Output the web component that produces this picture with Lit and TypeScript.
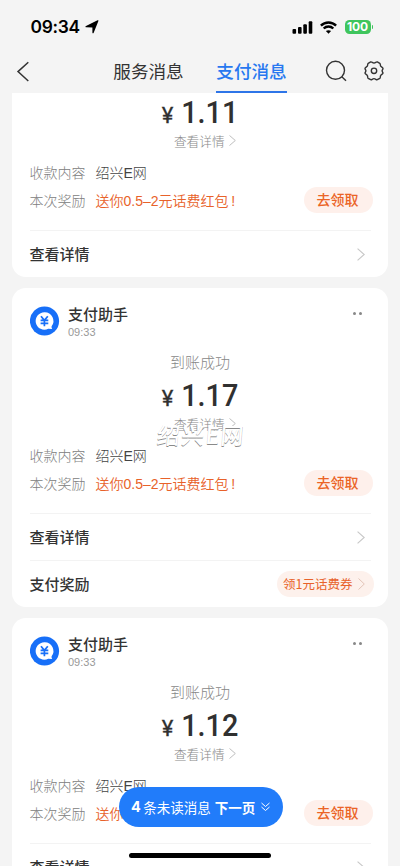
import { LitElement, html, css, nothing } from "lit";
import { customElement, property } from "lit/decorators.js";

const chevron = (w: number, h: number) => html`<svg width=${w} height=${h} viewBox="0 0 7 12" preserveAspectRatio="none" fill="none" stroke="currentColor" stroke-width="1"><path d="M.5 .5 6.3 6 .5 11.5" /></svg>`;

@customElement("status-bar")
class StatusBar extends LitElement {
  static styles = css`
    :host { display: flex; height: 53px; box-sizing: border-box; padding: 17px 27px 0 30.5px; align-items: flex-start; justify-content: space-between; color: #000; }
    .left { display: flex; align-items: center; height: 20px; gap: 5px; }
    .time { font: 600 17.4px/20px Inter, sans-serif; letter-spacing: -0.3px; white-space: nowrap; width: 49px; }
    .right { display: flex; align-items: center; height: 20px; }
    .wifi { margin: 0 8px 0 7px; }
    .battery { width: 26px; height: 14px; border-radius: 4.5px; background: #3fc55d; color: #fff; font: 700 12px/14px Inter, sans-serif; text-align: center; letter-spacing: -0.1px; }
    .cap { width: 1.5px; height: 4px; margin-left: 1px; border-radius: 0 2px 2px 0; background: #3fc55d; }
    svg { display: block; }
  `;
  render() {
    return html`
      <div class="left">
        <span class="time">09:34</span>
        <svg width="14" height="14" viewBox="0 0 14 14"><path d="M13.4.9 8.6 12.9c-.3.7-1.200.6-1.200-.2V7.400L1.300 7.300C.3 7.300.2 6.400 1 6L12.500.3c.7-.3 1.200 0 .9.6Z" fill="#000" /></svg>
      </div>
      <div class="right">
        <svg width="21" height="13" viewBox="0 0 21 13"><rect x=".5" y="8" width="3.6" height="4.7" rx="1" /><rect x="6" y="6" width="3.6" height="6.7" rx="1" /><rect x="11.3" y="3.3" width="3.6" height="9.4" rx="1" /><rect x="16.7" y=".2" width="3.6" height="12.5" rx="1" /></svg>
        <svg class="wifi" width="17" height="13" viewBox="0 0 17 13" fill="none" stroke="#000" stroke-width="2.4"><path d="M.9 4.6C5.1.4 11.9.4 16.1 4.6M3.7 7.5c2.7-2.7 6.9-2.7 9.6 0" /><path d="m8.5 12.7-2.6-2.6c1.5-1.3 3.7-1.3 5.2 0Z" fill="#000" stroke="none" /></svg>
        <div class="battery">100</div><div class="cap"></div>
      </div>`;
  }
}

@customElement("nav-bar")
class NavBar extends LitElement {
  static styles = css`
    :host { display: flex; height: 40px; align-items: stretch; padding: 0 16.5px 0 16px; box-sizing: border-box; color: #333; }
    .side { flex: none; width: 97px; padding-top: 7.5px; box-sizing: border-box; }
    .tabs { display: flex; gap: 32px; flex: none; }
    .tab { box-sizing: border-box; width: 71px; height: 40px; font: 400 17.6px/35px "Noto Sans CJK SC", sans-serif; white-space: nowrap; text-align: center; }
    .active { color: #2878f0; font-weight: 500; border-bottom: 2px solid #2e75e8; }
    .tools { display: flex; flex: 1; justify-content: flex-end; gap: 17px; padding-top: 7px; }
    svg { display: block; flex: none; }
  `;
  render() {
    return html`
      <div class="side"><svg width="14" height="22" viewBox="0 0 14 22" fill="none" stroke="#333" stroke-width="1.5"><path d="M12.3 1.2 2 10.6l10.3 9.4" /></svg></div>
      <div class="tabs"><div class="tab">服务消息</div><div class="tab active">支付消息</div></div>
      <div class="tools">
        <svg width="22" height="22" viewBox="0 0 22 22" fill="none" stroke="#333" stroke-width="1.4"><circle cx="10.5" cy="10.3" r="9" /><path d="m16.8 16.8 4.2 4" /></svg>
        <svg width="20" height="22" viewBox="0 0 20 22" fill="none" stroke="#333" stroke-width="1.4" stroke-linejoin="round"><path d="M6.7 1.9 4.2 3.3C3.4 3.8 3.9 5.3 3.3 6.2 2.7 7.2 1 7.4 1 8.500 1 9.300 1.900 9.900 1.900 10.800S1 12.300 1 13.100c0 1.100 1.700 1.300 2.300 2.300.6.9.1 2.400.9 2.900l2.500 1.400c1 .5 1.800-1.100 3.300-1.100s2.300 1.600 3.300 1.100l2.500-1.400c.8-.5.3-2 .9-2.900.6-1 2.300-1.200 2.300-2.300 0-.8-.9-1.400-.9-2.300s.9-1.500.9-2.300c0-1.100-1.700-1.300-2.300-2.300-.6-.9-.1-2.400-.9-2.900L13.300 1.900C12.300 1.400 11.500 3 10 3S7.700 1.400 6.700 1.900Z" /><circle cx="10" cy="10.8" r="2.7" /></svg>
      </div>`;
  }
}

@customElement("pay-card")
class PayCard extends LitElement {
  @property() amount = "";
  @property({ type: Boolean }) reward = false;
  @property({ type: Boolean }) stamped = false;
  static styles = css`
    :host { display: block; position: relative; flex: none; background: #fff; border-radius: 14px; padding: 0 15px 0 17.5px; font-family: "Noto Sans CJK SC", sans-serif; color: #333; }
    svg { display: block; flex: none; }
    .head { display: flex; height: 60px; box-sizing: border-box; padding-top: 17px; }
    .avatar { margin: 1px 8.5px 0 0; }
    .who { flex: 1; }
    .name { font-size: 15px; line-height: 17px; font-weight: 500; }
    .time { font: 400 11px/13px "Liberation Sans", Arial, sans-serif; color: #999; margin-top: 4px; }
    .more { display: flex; gap: 2.5px; padding: 7px 11.5px 0 0; }
    .more i { width: 3px; height: 3px; border-radius: 50%; background: #888; }
    .center { margin: 0 2px 0 -0.5px; text-align: center; }
    .status { font-size: 15px; line-height: 20px; color: #888; padding-top: 4.5px; font-weight: 300; }
    .sum { display: flex; justify-content: center; align-items: baseline; height: 38px; line-height: 38px; margin-top: 5px; font-family: Roboto, sans-serif; font-weight: 500; color: #303030; }
    .yen { font-size: 22px; font-weight: 400; -webkit-text-stroke: 0.3px #303030; margin-right: 7px; }
    .num { font-size: 31px; transform: scaleX(0.93); margin: 0 -2.5px 0 -1px; }
    .link { display: flex; justify-content: center; align-items: center; gap: 4px; padding-left: 9.5px; margin-top: -0.5px; font-size: 12.7px; line-height: 18px; color: #888; font-weight: 300; }
    .link svg { color: #bbb; }
    .row { display: flex; align-items: center; font-size: 14px; height: 27.5px; font-weight: 300; }
    .rows { padding-top: 9px; height: 71.5px; }
    .row + .row { margin-top: 0.5px; }
    .key { width: 66px; color: #808080; }
    .val { flex: 1; color: #444; }
    .latin { font-family: "Liberation Sans", Arial, sans-serif; }
    .hot { color: #e8622a; font-weight: 350; }
    .btn { width: 69px; height: 26px; line-height: 25px; border-radius: 13px; background: #fef0eb; color: #eb6426; text-align: center; font-weight: 500; box-sizing: border-box; padding-right: 2px; }
    .line { height: 1px; background: #f3f3f3; margin-right: 2px; }
    .item { display: flex; align-items: center; justify-content: space-between; height: 46px; font-size: 15px; line-height: 20px; font-weight: 500; }
    .arrow { color: #c8c8c8; margin-right: 8px; }
    .coupon { display: flex; align-items: center; justify-content: space-between; width: 97px; height: 26px; box-sizing: border-box; padding: 0 9px 0 6px; border-radius: 13px; background: #fdf1ec; color: #e8622a; font-size: 12.5px; font-weight: 400; margin-right: -1px; white-space: nowrap; }
    .coupon svg { color: #e3c4b8; }
    .stamp { position: absolute; left: 2px; right: 0; top: 131px; text-align: center; font-size: 23px; line-height: 30px; letter-spacing: 1.3px; font-weight: 500; color: #fff; text-shadow: 0 1px 0 #8a8a8a; transform: skewX(-5deg); }
  `;
  render() {
    return html`
      <div class="head">
        <svg class="avatar" width="30" height="30" viewBox="0 0 30 30"><circle cx="14.5" cy="15" r="14.6" fill="#176ff8" /><path d="M14.4 6.3a8.7 8.7 0 1 0 3.8 16.500l4 .2c-.6-.8-.8-1.600-.6-2.700A8.700 8.700 0 0 0 14.400 6.300Z" fill="#fff" /><path d="m11 10.3 3.4 4.1 3.4-4.1M10.6 14.4h7.700M10.600 17.300h7.700M14.400 14v6.300" fill="none" stroke="#176ff8" stroke-width="1.7" /></svg>
        <div class="who"><div class="name">支付助手</div><div class="time">09:33</div></div>
        <div class="more"><i></i><i></i></div>
      </div>
      <div class="center">
        <div class="status">到账成功</div>
        <div class="sum"><span class="yen">¥</span><span class="num">${this.amount}</span></div>
        <div class="link">查看详情 ${chevron(7, 11)}</div>
      </div>
      <div class="rows">
        <div class="row"><span class="key">收款内容</span><span class="val">绍兴<span class="latin">E</span>网</span></div>
        <div class="row"><span class="key">本次奖励</span><span class="val hot">送你<span class="latin">0.5–2</span>元话费红包<span class="latin">&thinsp;!</span></span><span class="btn">去领取</span></div>
      </div>
      <div class="line"></div>
      <div class="item">查看详情<span class="arrow">${chevron(8, 13)}</span></div>
      ${this.reward ? html`<div class="line"></div><div class="item">支付奖励<span class="coupon">领1元话费券${chevron(7, 12)}</span></div>` : nothing}
      ${this.stamped ? html`<div class="stamp">绍兴E网</div>` : nothing}`;
  }
}

@customElement("app-root")
class AppRoot extends LitElement {
  static styles = css`
    :host { display: flex; flex-direction: column; position: relative; width: 400px; height: 866px; overflow: hidden; background: #f4f4f4; }
    .feed { flex: 1; min-height: 0; overflow: hidden; display: flex; flex-direction: column; gap: 10.5px; padding: 0 12px; }
    .first { margin-top: -88.5px; }
    .unread { position: absolute; left: 119px; top: 786.5px; width: 163.5px; height: 40.5px; box-sizing: border-box; border-radius: 21px; background: #217cfa; color: #fff; display: flex; align-items: center; padding-left: 12px; font: 400 13.5px/40px "Noto Sans CJK SC", sans-serif; white-space: nowrap; }
    .count { font: 700 14.5px/40px Inter, sans-serif; margin-right: 2.5px; }
    .next { font-weight: 700; margin: 0 6px 0 4px; }
    .home { position: absolute; left: 129px; top: 852.5px; width: 142px; height: 5px; border-radius: 3px; background: #000; }
  `;
  render() {
    return html`
      <status-bar></status-bar>
      <nav-bar></nav-bar>
      <div class="feed">
        <pay-card class="first" amount="1.11"></pay-card>
        <pay-card amount="1.17" reward stamped></pay-card>
        <pay-card amount="1.12"></pay-card>
      </div>
      <div class="unread"><span class="count">4</span>条未读消息<span class="next">下一页</span><svg width="9" height="10" viewBox="0 0 9 10" fill="none" stroke="#fff" stroke-width="1"><path d="m.5 1 4 3.5 4-3.5M.5 5l4 3.5 4-3.5" /></svg></div>
      <div class="home"></div>`;
  }
}
